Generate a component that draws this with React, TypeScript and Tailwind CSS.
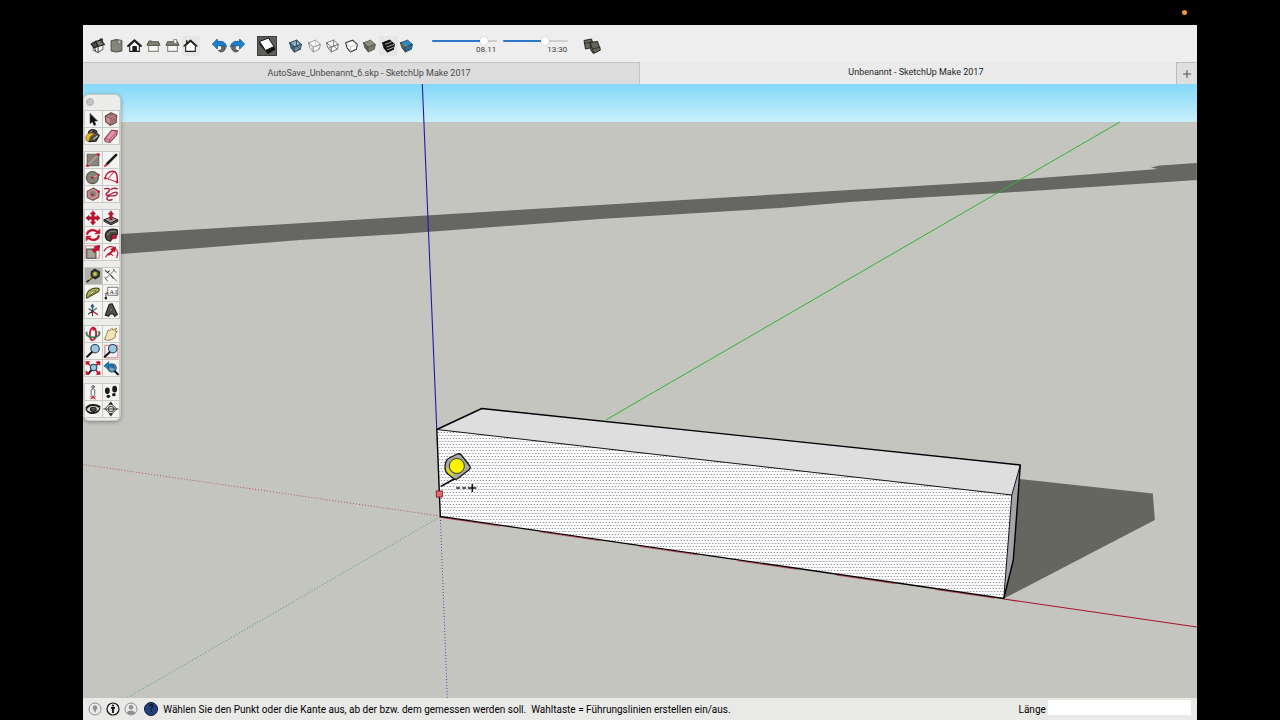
import React, { useState } from "react";

type Tool = { label: string; art: React.ReactNode; active?: boolean };

const RED = "#c8102e";
const INK = "#1c1c1a";
const OLIVE = "#85857a";
const PINK = "#c98f93";

function Icon({ children, className = "size-4" }: { children: React.ReactNode; className?: string }) {
  return (
    <svg viewBox="1 1 14 14" className={className} fill="none" stroke={INK} strokeWidth="1" strokeLinejoin="round" strokeLinecap="round" aria-hidden="true">
      {children}
    </svg>
  );
}

const viewTools: Tool[] = [
  {
    label: "Iso",
    art: (
      <>
        <path d="M4 9v3.500l4.500 2 4.500-3V8" fill="#fafafa" stroke="#77776d" />
        <path d="M2 6.500 6.500 4l2 4.500L5 10.500z" fill="#505049" />
        <path d="M6.500 4 11 3l3.500 4L8.500 9z" fill="#77776a" />
        <path d="M10.500 3.500V2h2v3" fill="#55554c" />
        <path d="M6 11.500v1.500M8.500 9.500v5" strokeWidth=".8" />
      </>
    ),
  },
  {
    label: "Oben",
    art: (
      <>
        <path d="M3 3.500 8 2.500l5 1v9.500l-5 1-5-1z" fill={OLIVE} stroke="#55554c" />
        <path d="M9.500 3h2.500v3.500H9.500z" fill="#b9b9ac" stroke="#66665c" strokeWidth=".6" />
      </>
    ),
  },
  {
    label: "Vorne",
    art: (
      <>
        <path d="M3.500 8v5.500h9V8L8 4z" fill="#fff" />
        <path d="M2 8.500 8 3l6 5.500" strokeWidth="1.800" />
        <path d="M6.500 9h3.200v4.500H6.500z" fill={INK} />
      </>
    ),
  },
  {
    label: "Rechts",
    art: (
      <>
        <path d="M3.500 8h9v5.500h-9z" fill="#f8f8f6" stroke="#8a8a80" />
        <path d="M2 7.800 3.500 4.500h9L14 7.800z" fill={OLIVE} stroke="#55554c" />
        <path d="M4 3.800h2" stroke="#55554c" />
      </>
    ),
  },
  {
    label: "Hinten",
    art: (
      <>
        <path d="M3.500 8h9v5.500h-9z" fill="#f8f8f6" stroke="#8a8a80" />
        <path d="M2 7.800 3.500 4.500h9L14 7.800z" fill={OLIVE} stroke="#55554c" />
        <path d="M9.500 2.500h2.500v3.500H9.500z" fill="#fff" stroke="#77776d" strokeWidth=".8" />
      </>
    ),
  },
  {
    label: "Links",
    active: true,
    art: (
      <>
        <path d="M3.500 8v5.500h9V8L8 4z" fill="#fff" />
        <path d="M2 8.500 8 3l6 5.500M4.500 5.500v-2" strokeWidth="1.300" />
      </>
    ),
  },
];

const historyTools: Tool[] = [
  {
    label: "Rückgängig",
    art: (
      <>
        <path d="M11 7c2.500 1 3 3 2 5-1 1.500-2.500 2-4 2l-2-1.200c3-.3 4-2 2.500-4z" fill="#6a6a60" stroke="#44443e" strokeWidth=".8" />
        <path d="M1.500 6.500 6 2v2.300c4-.6 8 .2 8.500 5.200C12.500 7.800 9.500 7.800 6 8.300V11z" fill="#1c7fd0" stroke="#15588f" strokeWidth=".8" />
      </>
    ),
  },
  {
    label: "Wiederholen",
    art: (
      <>
        <path d="M5 7c-2.500 1-3 3-2 5 1 1.500 2.500 2 4 2l2-1.200c-3-.3-4-2-2.500-4z" fill="#6a6a60" stroke="#44443e" strokeWidth=".8" />
        <path d="M14.500 6.500 10 2v2.300c-4-.6-8 .2-8.500 5.200C3.500 7.800 6.500 7.800 10 8.300V11z" fill="#1c7fd0" stroke="#15588f" strokeWidth=".8" />
      </>
    ),
  },
];

function Cube({ top, left, right, edge, edgeWidth = 1, inner }: { top: string; left: string; right: string; edge: string; edgeWidth?: number; inner?: React.ReactNode }) {
  return (
    <>
      <g stroke={edge} strokeWidth={edgeWidth}>
        <path d="M2.500 5.500 9 3l4.500 4L7 9.500z" fill={top} />
        <path d="M2.500 5.500 7 9.500v4.500L4 10.500z" fill={left} />
        <path d="M7 9.500l6.500-2.500-1 4.500L7 14z" fill={right} />
      </g>
      {inner}
    </>
  );
}

const styleTools: Tool[] = [
  { label: "Röntgen", art: <Cube top="#8fb0c4" left="#4e7590" right="#6f93aa" edge="#3a5262" inner={<path d="M9 3v5.500l3.500 3M9 8.500l-5 2" stroke="#2f4655" strokeWidth=".8" />} /> },
  { label: "Hintere Kanten", art: <Cube top="#fbfbfb" left="#eeeeee" right="#f8f8f8" edge="#8a8a8a" edgeWidth={0.8} inner={<path d="M9 3v5.500l3.500 3" stroke="#c4c4c4" strokeWidth=".7" />} /> },
  { label: "Drahtgitter", art: <Cube top="#fbfbfb" left="#f4f4f4" right="#f8f8f8" edge="#686868" edgeWidth={0.8} inner={<path d="M9 3v5.500l3.500 3M9 8.500l-5 2" stroke="#777" strokeWidth=".8" />} /> },
  {
    label: "Verdeckte Linie",
    art: (
      <>
        <path d="M2.500 5.500 9 3l4.500 4-1 4.500L7 14l-3-3.500z" fill="#fff" stroke="#333" />
        <path d="M2.500 5.500 7 9.500l6.500-2.500M7 9.500V14" stroke="#aaa" strokeWidth=".6" />
      </>
    ),
  },
  { label: "Schattiert", art: <Cube top="#8f8f80" left="#5c5c50" right="#7a7a6c" edge="#55554b" edgeWidth={0.8} /> },
  {
    label: "Mit Texturen",
    active: true,
    art: (
      <>
        <path d="M2.500 5.500 9 3l4.500 4-1 4.500L7 14l-3-3.500z" fill="#111" stroke="#111" />
        <path d="M5 6.800 10.500 4.800M6.500 9.300l6.500-2.300M7 12l5.500-2.200" stroke="#aaa" strokeWidth=".9" />
      </>
    ),
  },
  { label: "Monochrom", art: <Cube top="#2589cf" left="#4d6d50" right="#1f6fa9" edge="#2d3a40" edgeWidth={0.8} inner={<path d="M3 6l4 3.500 2.500-1z" fill="#8a8a52" stroke="none" />} /> },
];

const palette: Tool[][] = [
  [
    { label: "Auswählen", art: <path d="M5.500 3.500v8.500l2-1.700 1.500 3.300 1.500-.7-1.500-3.200h2.700z" fill="#111" stroke="#111" strokeWidth=".5" /> },
    {
      label: "Komponente erstellen",
      art: (
        <>
          <path d="M3 5.500 8 2.500l5 2.500-.5 6-5 2.500-4-3z" fill={PINK} stroke="#6c4549" />
          <path d="M3 5.500 8 7.500l5-2.500M8 7.500l-.5 6" stroke="#7d4b52" strokeWidth=".8" />
          <path d="M9.500 8.500l2-1v2.500l-2 1zM6 4.500l2-1 2 1-2 .9z" fill="#8a8a7c" stroke="#7d4b52" strokeWidth=".5" />
        </>
      ),
    },
    {
      label: "Farbeimer",
      art: (
        <>
          <path d="M4 6.500 8.500 3.500l5 4-3 5-6 .5z" fill="#52544a" />
          <path d="M4 5.500C5 2 9.500 1.500 11.500 4.500" strokeWidth="1.200" />
          <path d="M2 8c1.500-3 5.500-3.500 7-1.500C7 7.500 5.500 8 5 11c-.5 2.500-3 2-3 0z" fill="#e9b52d" stroke="#7b5c12" strokeWidth=".7" />
          <path d="M8.500 10.500l3.500-2.500" stroke="#c9ccbc" />
        </>
      ),
    },
    {
      label: "Radiergummi",
      art: (
        <>
          <path d="M2.500 10.500 8.500 3l5 .5-.5 3.500-6 6.500-4-.5z" fill="#e895ab" stroke="#8e3f56" />
          <path d="M2.500 10.500l4.300.5 6.700-7.500M6.800 11l.2 2.500" stroke="#a54b65" strokeWidth=".8" />
        </>
      ),
    },
  ],
  [
    {
      label: "Rechteck",
      art: (
        <>
          <path d="M3 3h10v10H3z" fill={OLIVE} stroke="#66665c" />
          <path d="M3.500 12.500l9-9" stroke="#d7a0a0" />
          <path d="M2.500 12.300H4v1.300H2.500zM12 2.500h1.500V4H12z" fill={RED} stroke={RED} strokeWidth=".6" />
        </>
      ),
    },
    { label: "Linie", art: (<><path d="M4.500 11.500l8-8" strokeWidth="2.300" /><path d="M2.700 13.300l1.800-1.800" stroke={RED} strokeWidth="1.500" /></>) },
    {
      label: "Kreis",
      art: (
        <>
          <circle cx="7.500" cy="8.500" r="5.300" fill={OLIVE} stroke="#55554c" />
          <path d="M7.500 8.500l5-2" stroke="#d7a0a0" />
          <path d="M7 8h1.200v1.200H7zM12.300 5.500h1.200v1.200h-1.200z" fill={RED} stroke={RED} strokeWidth=".6" />
        </>
      ),
    },
    {
      label: "Bogen",
      art: (
        <>
          <path d="M3 9C3 5.500 6 3 9.500 3c3 0 4.500 3 4 9" stroke={RED} strokeWidth="1.200" />
          <path d="M3 9l10.500 3.500M10.500 3.500 5.500 9.500" stroke={RED} strokeWidth=".8" />
          <path d="M2.500 8.500h1.200v1.200H2.500zM12.800 12H14v1.200h-1.200z" fill={RED} stroke={RED} strokeWidth=".6" />
        </>
      ),
    },
    {
      label: "Polygon",
      art: (
        <>
          <path d="M3 5.500 8.500 2.800l4.800 3-.3 5-5 2.700L3 11z" fill={PINK} stroke="#765157" />
          <path d="M5 6l4-1 2 3-2 3-4-1z" fill={OLIVE} stroke="none" />
          <path d="M7 8h1.200v1.200H7zM12.500 5.300h1.200v1.200h-1.200z" fill={RED} stroke={RED} strokeWidth=".6" />
        </>
      ),
    },
    { label: "Freihand", art: <path d="M2.500 3.500c5-1.500 5 1.500 2 3.500-2.500 2 .5 3 3.500 1s7-2.500 5 .5c-2 2.500-6 0-8 2-2 2.500 1 3.500 4 2.500M8 4c2-1 4-1.500 5.500-.5" stroke="#a81e39" strokeWidth="1.200" /> },
  ],
  [
    {
      label: "Verschieben",
      art: <path d="M8 1.800 10.300 4.500H9v2.500h2.500V5.700L14.200 8l-2.700 2.300V9H9v2.500h1.300L8 14.200l-2.300-2.700H7V9H4.500v1.300L1.800 8l2.700-2.300V7H7V4.500H5.700z" fill={RED} stroke="#8f1027" strokeWidth=".5" />,
    },
    {
      label: "Drücken/Ziehen",
      art: (
        <>
          <path d="M2 9.500 8 7l6 2.500L8 12.500z" fill="#9b9c8d" strokeWidth=".8" />
          <path d="M2 9.500v1.500L8 14l6-3V9.500L8 12.500z" fill="#6b6c60" strokeWidth=".8" />
          <path d="M8 1.800l2.300 2.900H9V9.500H7V4.700H5.700z" fill={RED} stroke="#8f1027" strokeWidth=".5" />
        </>
      ),
    },
    {
      label: "Drehen",
      art: (
        <>
          <path d="M3 7c.5-3 5-4.500 8.500-2M13 9c-.5 3-5 4.500-8.500 2" stroke={RED} strokeWidth="2" />
          <path d="M10 7l4-.2V3zM6 9l-4 .2V13z" fill={RED} stroke={RED} strokeWidth=".6" />
        </>
      ),
    },
    {
      label: "Folge mir",
      art: (
        <>
          <path d="M13.500 3.500C8 1.500 3 4 3 8.500c0 3 2 4.500 4.500 5l1.700-2.700C7 10 7.500 7.500 13.500 7.500z" fill="#4c473f" />
          <path d="M5 8C5.500 5 9 4 12.500 5.300" stroke="#8f9082" strokeWidth=".8" />
          <path d="M8.500 9.300l5-2-1 3.700-3.500.5z" fill={RED} stroke="#8f1027" strokeWidth=".5" />
        </>
      ),
    },
    {
      label: "Skalieren",
      art: (
        <>
          <path d="M2 2.500h11.500v11H2z" stroke="#d56d7a" strokeWidth=".7" />
          <path d="M2.500 5.500h8v8h-8z" fill="#a2a193" stroke="#55554c" />
          <path d="M9 8.500 7 6l2.500-1-.5-1.500 5-1.500-1 5-1.500-.5z" fill={RED} stroke="#8f1027" strokeWidth=".5" />
        </>
      ),
    },
    {
      label: "Versatz",
      art: (
        <>
          <path d="M2 7C4.500 3 9 2 12 5s1.800 5 1 8M3.500 12.500c1-3 3.500-4 6-1.500" stroke="#c02540" strokeWidth="1.100" />
          <path d="M5 10l4-3.500-1.500-1 4.500-2-.5 4.500-1.300-.7-4 3.700z" fill={RED} stroke="#8f1027" strokeWidth=".4" />
        </>
      ),
    },
  ],
  [
    {
      label: "Maßband",
      active: true,
      art: (
        <>
          <path d="M6.500 4.500 9.500 2.200l4.200 2.300-.5 4-3.200 2-3.500-2z" fill="#3f4038" />
          <circle cx="9.800" cy="6.200" r="1.900" fill="#c8cb46" stroke="#77792a" strokeWidth=".6" />
          <path d="M7 9.500 3 13" stroke="#222" strokeWidth="1.500" />
          <path d="M6.500 9l-2 2.200" stroke="#c9c93d" strokeWidth=".9" />
        </>
      ),
    },
    {
      label: "Abmessung",
      art: (
        <>
          <path d="M3 10.500l8-7.500M5.500 5 13 12.500M2.500 9l2.500 3.500M10 2l2.500 3" stroke="#66665f" strokeWidth=".8" />
          <path d="M3 3l2 2 1.500-1.500M8 7.500l2 2.500" stroke="#333" strokeWidth=".9" />
        </>
      ),
    },
    {
      label: "Winkelmesser",
      art: (
        <>
          <path d="M2.500 12.500C1.500 7.500 6 2.500 13 4c.8 1 .5 2-.5 3z" fill="#b8bd56" stroke="#4c4d20" />
          <path d="M5 10.200C5 7.800 7.500 5.800 10.500 6z" fill="#f1f1e8" stroke="#5f6130" strokeWidth=".8" />
        </>
      ),
    },
    {
      label: "Text",
      art: (
        <>
          <path d="M5.500 3h8.500v7H5.500z" fill="#fff" stroke="#555" strokeWidth=".7" />
          <path d="M5.500 8H3.500v4" stroke="#333" strokeWidth=".8" />
          <path d="M2.500 11.500h2v2h-2z" fill={INK} stroke="none" />
          <text x="6.500" y="8.700" fontSize="6" fontFamily="Liberation Serif, serif" fill="#222" stroke="none">A1</text>
        </>
      ),
    },
    {
      label: "Achsen",
      art: (
        <>
          <path d="M7.500 9V3.500M6.500 5 7.500 3.200 8.500 5" stroke="#2a5d91" strokeWidth="1.200" />
          <path d="M7.500 9l4.500 3" stroke={RED} strokeWidth="1.100" />
          <path d="M7.500 9l3.500-2.500" stroke="#2e8b4b" strokeWidth="1.100" />
          <path d="M7.500 9l-3.500 2.500M7.500 9v4M7.500 9l-3-2" stroke="#333" strokeWidth=".9" />
        </>
      ),
    },
    {
      label: "3D-Text",
      art: (
        <>
          <path d="M3 12.500 6.500 3l2.500-.5 4.500 9.500-2.200 1.500-1.500-2H7l-1 2z" fill="#52534b" />
          <path d="M7 8.500l.8-2.500 1.300 2.500z" fill="#c3c4b7" stroke="#333" strokeWidth=".5" />
        </>
      ),
    },
  ],
  [
    {
      label: "Rotieren",
      art: (
        <>
          <path d="M8 2.500C4.500 4 4.500 11.500 7 13.500M9 3c2.500 2 2.500 8-.5 10" stroke="#c02540" strokeWidth="1.700" />
          <path d="M2.500 6.500c-1 3 3 4.500 6 4.500s6-2 5-4.500" stroke="#3b7a50" strokeWidth="1.500" />
          <path d="M7.500 2l3 1-2 2z" fill={RED} stroke={RED} strokeWidth=".5" />
          <path d="M12 5.500l2.500.5-1 2.500z" fill="#3b7a50" stroke="none" />
        </>
      ),
    },
    { label: "Schwenken", art: <path d="M2.500 12.500 4 8.500 5.500 4.500l1.500.5 2-2 .5 1.500 3.500-1.500-1.500 2.500 2 .5-2 2 .5 2.500-3.500 2.500-3.500.5z" fill="#f0e4b4" stroke="#8c7b48" strokeWidth=".8" /> },
    {
      label: "Zoom",
      art: (
        <>
          <circle cx="9.800" cy="6" r="3.700" fill="#9ec5df" stroke="#27485c" />
          <path d="M7 9 2.800 13" stroke="#151515" strokeWidth="1.800" />
        </>
      ),
    },
    {
      label: "Zoomfenster",
      art: (
        <>
          <path d="M3 3h11v11H3z" stroke="#d56d7a" strokeWidth=".8" />
          <circle cx="9.500" cy="6" r="3.700" fill="#9ec5df" stroke="#27485c" />
          <path d="M6.800 9 2.500 13" stroke="#151515" strokeWidth="1.800" />
        </>
      ),
    },
    {
      label: "Alles zoomen",
      art: (
        <>
          <path d="M7 9.500 4 13" stroke="#151515" strokeWidth="1.600" />
          <circle cx="8.500" cy="7.500" r="2.800" fill="#9ec5df" stroke="#27485c" />
          <path d="M2 2.500h3L2.500 5zM14 2.500v3L11 3zM14 13.500h-3l2.500-2.500zM2 13.500v-3L4.500 13z" fill={RED} stroke={RED} strokeWidth=".8" />
          <path d="M3 3.500l2 1.700M13 3.500l-1.800 1.700M13 12.500l-2-2" stroke={RED} strokeWidth="1.400" />
        </>
      ),
    },
    {
      label: "Vorherige",
      art: (
        <>
          <circle cx="9" cy="8" r="3.500" fill="#6f9fc0" stroke="#27485c" />
          <path d="M11.500 11l2.500 2.500" stroke="#151515" strokeWidth="1.800" />
          <path d="M2 6l4-3.500v2c3.500 0 5 1 5 4C9.500 7.200 8 7 6 7v2.300z" fill="#1d77b8" stroke="#15507d" strokeWidth=".6" />
        </>
      ),
    },
  ],
  [
    {
      label: "Kamera positionieren",
      art: (
        <>
          <circle cx="8" cy="3.500" r="1.100" fill="#fff" stroke="#444" strokeWidth=".8" />
          <path d="M6.500 6c.5-1 2.500-1 3 0v4L8.500 12h-1l-1-2z" fill="#f5f5f5" stroke="#555" strokeWidth=".8" />
          <path d="M6 14l4-2M6 12l4 2" stroke={RED} strokeWidth=".8" />
        </>
      ),
    },
    {
      label: "Gehen",
      art: (
        <g fill="#1b1b1b" stroke="none">
          <ellipse cx="4.800" cy="7" rx="2.100" ry="2.900" />
          <ellipse cx="5.700" cy="11.800" rx="1.600" ry="1.500" />
          <ellipse cx="11.200" cy="5.500" rx="2.100" ry="2.900" />
          <ellipse cx="10.500" cy="10.300" rx="1.600" ry="1.500" />
        </g>
      ),
    },
    {
      label: "Umsehen",
      art: (
        <>
          <path d="M2 8.500c2-4.500 9.500-5 12-1-1.500 4-9 5.500-12 1z" fill="#d8d8d0" />
          <ellipse cx="8.300" cy="8.300" rx="2.500" ry="1.800" fill="#55564d" />
          <path d="M2 7C4.500 3.500 10.500 3.500 14 6M3.500 10.500c3 2 7 1.500 9-.5" strokeWidth="1.300" />
        </>
      ),
    },
    {
      label: "Schnittebene",
      art: (
        <>
          <path d="M8 3l5 5-5 5-5-5zM1.800 8h12.400" stroke="#333" strokeWidth=".8" />
          <circle cx="8" cy="8" r="2.500" fill="#d5d5cd" stroke="#333" strokeWidth=".8" />
          <path d="M8 2 9.300 4H6.700zM8 14l1.300-2H6.700zM6 8h4" fill="#222" strokeWidth=".6" />
        </>
      ),
    },
  ],
];

function ToolbarGroup({ tools, className }: { tools: Tool[]; className: string }) {
  return (
    <div className={`grid shrink-0 ${className}`}>
      {tools.map((t) => (
        <button key={t.label} aria-label={t.label} className={`flex h-5 items-center justify-center rounded-xs ${t.active ? "bg-[#e6e6e6]" : ""}`}>
          <Icon className="size-[15px]">{t.art}</Icon>
        </button>
      ))}
    </div>
  );
}

function ShadowSlider({ label, value, start, track }: { label: string; value: string; start: number; track: string }) {
  const [pos, setPos] = useState(start);
  return (
    <label className="flex w-[65px] flex-col items-end">
      <input
        type="range"
        aria-label={label}
        value={pos}
        onChange={(e) => setPos(Number(e.target.value))}
        className={`h-2 w-full appearance-none bg-transparent [&::-webkit-slider-runnable-track]:h-[2px] [&::-webkit-slider-runnable-track]:rounded-full [&::-webkit-slider-thumb]:-mt-[3px] [&::-webkit-slider-thumb]:size-2 [&::-webkit-slider-thumb]:appearance-none [&::-webkit-slider-thumb]:rounded-full [&::-webkit-slider-thumb]:bg-white [&::-webkit-slider-thumb]:shadow-[0_0_1px_rgba(0,0,0,0.4)] ${track}`}
      />
      <span className="pr-px text-[8px] leading-[9px] text-[#3c3c3c]">{value}</span>
    </label>
  );
}

function Scene() {
  return (
    <svg viewBox="83 84 1114 614" preserveAspectRatio="xMidYMid slice" className="absolute inset-0 size-full" role="img" aria-label="Modellansicht">
      <defs>
        <linearGradient id="sky" x1="0" y1="0" x2="0" y2="1">
          <stop offset="0" stopColor="#84d8fa" />
          <stop offset="1" stopColor="#c8effb" />
        </linearGradient>
        <pattern id="dots" width="3" height="6" patternUnits="userSpaceOnUse">
          <rect width="3" height="6" fill="#fdfdfe" />
          <rect width="1" height="1" fill="#74747f" />
          <rect x="1" y="3" width="1" height="1" fill="#9a9aa5" />
          <rect x="2" y="3" width="1" height="1" fill="#d0d0d8" />
        </pattern>
      </defs>
      <rect x="83" y="84" width="1114" height="614" fill="#c5c5c0" />
      <rect x="83" y="84" width="1114" height="38" fill="url(#sky)" />
      <path d="M83 237 121 234 500 211 700 199 1000 181 1100 173.500 1158 169 1151 167.500 1160 165.500 1197 163V180L1000 193 930 197 850 202 780 208 600 219 400 234 300 240 200 248 121 254 83 257z" fill="#666662" />
      <path d="M1020 479l133 14.500 2 26.500-150 78z" fill="#666661" />
      <path d="M606 420 1120 122" stroke="#2fb52f" strokeWidth="1" />
      <path d="M422.500 84 437 430" stroke="#1d1da4" strokeWidth="1.100" />
      <path d="M1004 599l193 28" stroke="#a8142a" strokeWidth="1.200" />
      <path d="M83 464.500 440 516" stroke="#b5545c" strokeWidth="1" strokeDasharray="1 2" />
      <path d="M440 517 127 698" stroke="#62a982" strokeWidth="1.200" strokeDasharray="1 2" />
      <path d="M440.500 517l7 181" stroke="#4c4c9e" strokeWidth="1" strokeDasharray="1 2" />
      <path d="M437 429.500 482 408.500l538.500 56.500-8 30z" fill="#dedede" />
      <path d="M437 429.500 1012 495l-8 103.500L440.500 516.500z" fill="url(#dots)" />
      <path d="M1012 495l8.500-30-7 95-9.500 38.500z" fill="#a3a4a8" />
      <path d="M437 429.500 1012 495M1012 495l8.500-30M1012 495l-8 103" stroke="#15151a" strokeWidth="1" fill="none" />
      <path d="M437 429.500 482 408.500l538.500 56.500-7 95-9.500 38.500L440.500 516.500z" fill="none" stroke="#000" strokeWidth="1.400" strokeLinejoin="round" />
      <path d="M441 517.500 1004 599.500" stroke="#a8142a" strokeWidth=".6" strokeDasharray="60 40" />
      <path d="M441 486.500 456 478" stroke="#111" strokeWidth="1.800" />
      <path d="M446.500 461c.5-1.500 1.500-2.500 3-3l8-4c1.500-.5 3 0 4 1l8.500 11c1 1.500.5 2.500-.5 3.500L458 478.500c-1.500 1-3 1-4.500 0l-7-6c-1.500-3-1.500-8 0-11.500z" fill="#a9a9a6" stroke="#161616" strokeWidth="1.300" strokeLinejoin="round" />
      <path d="M447.500 468c.5 3.500 3 6 6 7.500" stroke="#e6e000" strokeWidth="2.200" fill="none" />
      <circle cx="457" cy="466" r="7.500" fill="#fbf400" stroke="#3a3a10" strokeWidth="1" />
      <path d="M456.500 488h3.500M462.500 488h3.500M468 488h8.500M472.500 484v8" stroke="#111" strokeWidth="1.500" />
      <rect x="436.500" y="491" width="6" height="6" fill="#e0707a" stroke="#8e1f2c" />
    </svg>
  );
}

function ToolPalette() {
  return (
    <aside aria-label="Werkzeuge" className="absolute top-[10px] left-0 w-[38px] rounded-md border border-[#c9c9c6] bg-[#ececeb] pb-[2px] shadow-[0_1px_4px_rgba(0,0,0,0.35)]">
      <div className="flex h-[15px] items-start px-[2px] pt-[3px]">
        <button aria-label="Schließen" className="size-2 rounded-full border border-[#b1b1b1] bg-[#c4c4c4]" />
      </div>
      <div className="flex flex-col gap-[6px]">
        {palette.map((group) => (
          <div key={group[0].label} className="grid w-[36px] grid-cols-2 gap-px border border-[#c9c9c7] bg-[#c9c9c7]">
            {group.map((t) => (
              <button key={t.label} aria-label={t.label} className={`flex h-4 items-center justify-center ${t.active ? "bg-[#b0b0ac]" : "bg-[#f4f4f2]"}`}>
                <Icon>{t.art}</Icon>
              </button>
            ))}
          </div>
        ))}
      </div>
    </aside>
  );
}

export default function App() {
  return (
    <div className="flex min-h-screen flex-col bg-black px-[6.5%] font-['Roboto','Liberation_Sans',sans-serif] text-[#262626]">
      <div className="relative h-[25px]">
        <span className="absolute top-[10px] right-[10px] size-[5px] rounded-full bg-[#ef9735]" />
      </div>

      <header className="flex h-[37px] items-center bg-[#eeeeee] pt-1 pl-[5px]">
        <ToolbarGroup tools={viewTools} className="w-[112px] grid-cols-6" />
        <ToolbarGroup tools={historyTools} className="ml-[10px] w-[37px] grid-cols-2" />
        <button aria-label="Parallelprojektion" className="ml-[10px] flex size-5 items-center justify-center border border-[#3f3f3c] bg-[#5e5e5b]">
          <svg viewBox="0 0 20 20" className="size-5 shrink-0" aria-hidden="true">
            <path d="M2.500 5.500 11.500 2l5.500 8.500-8.500 4z" fill="#fff" stroke="#111" strokeLinejoin="round" />
            <path d="M8.500 15l8.500-4.500 1.500 3L11 18z" fill="#111" />
            <path d="M2.500 5.500v3.500L11 18l-2.500-3.500z" fill="#222" />
          </svg>
        </button>
        <ToolbarGroup tools={styleTools} className="ml-[9px] w-[130px] grid-cols-7" />
        <div className="ml-4 flex gap-[6px]">
          <ShadowSlider label="Datum" value="08.11" start={84} track="[&::-webkit-slider-runnable-track]:bg-[linear-gradient(to_right,#2d78c8_82%,#cfcfcf_82%)]" />
          <ShadowSlider label="Uhrzeit" value="13:30" start={67} track="[&::-webkit-slider-runnable-track]:bg-[linear-gradient(to_right,#2d78c8_67%,#cfcfcf_67%)]" />
        </div>
        <button aria-label="Schatten" className="ml-[14px] flex size-5 items-center justify-center">
          <svg viewBox="0 0 20 20" className="size-5" stroke="#24241f" strokeLinejoin="round" fill="#66665b" aria-hidden="true">
            <path d="M2 4.500 9.500 3l2.500 8-8.500 2z" />
            <path d="M8 6.500l7.500-1 3 8.500-7 3.500-2.500-3z" />
            <path d="M3 7.500l7-1.500M8 6.500l2.500 6.500 8-2M10.500 13l1 4" fill="none" strokeWidth=".8" />
          </svg>
        </button>
      </header>

      <nav aria-label="Dokumente" className="flex h-[22px] text-[9px] text-[#262626]">
        <button className="w-1/2 border-t border-r border-[#c2c2c2] bg-[#dcdcdc] pl-4 text-[#4a4a4a]">AutoSave_Unbenannt_6.skp - SketchUp Make 2017</button>
        <button className="flex-1 bg-[#ebebeb] pl-4">Unbenannt - SketchUp Make 2017</button>
        <button aria-label="Neuer Tab" className="flex w-[21px] items-center justify-center border-t border-l border-[#bdbdbd] bg-[#dfdfdf]">
          <svg viewBox="0 0 8 8" className="size-2" stroke="#555" aria-hidden="true">
            <path d="M4 0v8M0 4h8" />
          </svg>
        </button>
      </nav>

      <main className="relative min-h-[400px] flex-1 overflow-hidden bg-[#c5c5c0]">
        <Scene />
        <ToolPalette />
      </main>

      <footer className="flex h-[22px] items-center bg-[#e9e9e8] pr-[6px] pl-[5px] text-[10px] text-black">
        <div className="flex items-center gap-1">
          <button aria-label="Geo-Standort">
            <svg viewBox="0 0 14 14" className="size-[14px]" fill="none" stroke="#8f8f8f" aria-hidden="true">
              <circle cx="7" cy="7" r="6" />
              <path d="M7 11 5.200 7a2.300 2.300 0 1 1 3.600 0z" fill="#8f8f8f" stroke="none" />
            </svg>
          </button>
          <button aria-label="Modellinfo">
            <svg viewBox="0 0 14 14" className="size-[14px]" fill="none" stroke="#111" strokeWidth="1.200" aria-hidden="true">
              <circle cx="7" cy="7" r="6" />
              <circle cx="7" cy="3.600" r="1.100" fill="#111" stroke="none" />
              <path d="M5 5.800h4M7 5.500v5.500" strokeWidth="1.800" />
            </svg>
          </button>
          <button aria-label="Anmelden">
            <svg viewBox="0 0 14 14" className="size-[14px]" fill="none" stroke="#8f8f8f" aria-hidden="true">
              <circle cx="7" cy="7" r="6" />
              <circle cx="7" cy="5.200" r="2.200" fill="#8f8f8f" stroke="none" />
              <path d="M3 11c.5-3.500 7.500-3.500 8 0-2 2-6 2-8 0z" fill="#8f8f8f" stroke="none" />
            </svg>
          </button>
        </div>
        <button aria-label="Hilfe" className="ml-[6px] flex size-[14px] items-center justify-center rounded-full border border-[#101828] bg-[#23407f] text-[10px] leading-none font-bold text-[#0c1222]">?</button>
        <p className="ml-[5px] whitespace-pre">Wählen Sie den Punkt oder die Kante aus, ab der bzw. dem gemessen werden soll.  Wahltaste = Führungslinien erstellen ein/aus.</p>
        <label htmlFor="length" className="ml-auto">Länge</label>
        <input id="length" type="text" className="mt-[2px] ml-[2px] h-[15px] w-[143px] self-start bg-white px-1 outline-none" />
      </footer>
    </div>
  );
}
